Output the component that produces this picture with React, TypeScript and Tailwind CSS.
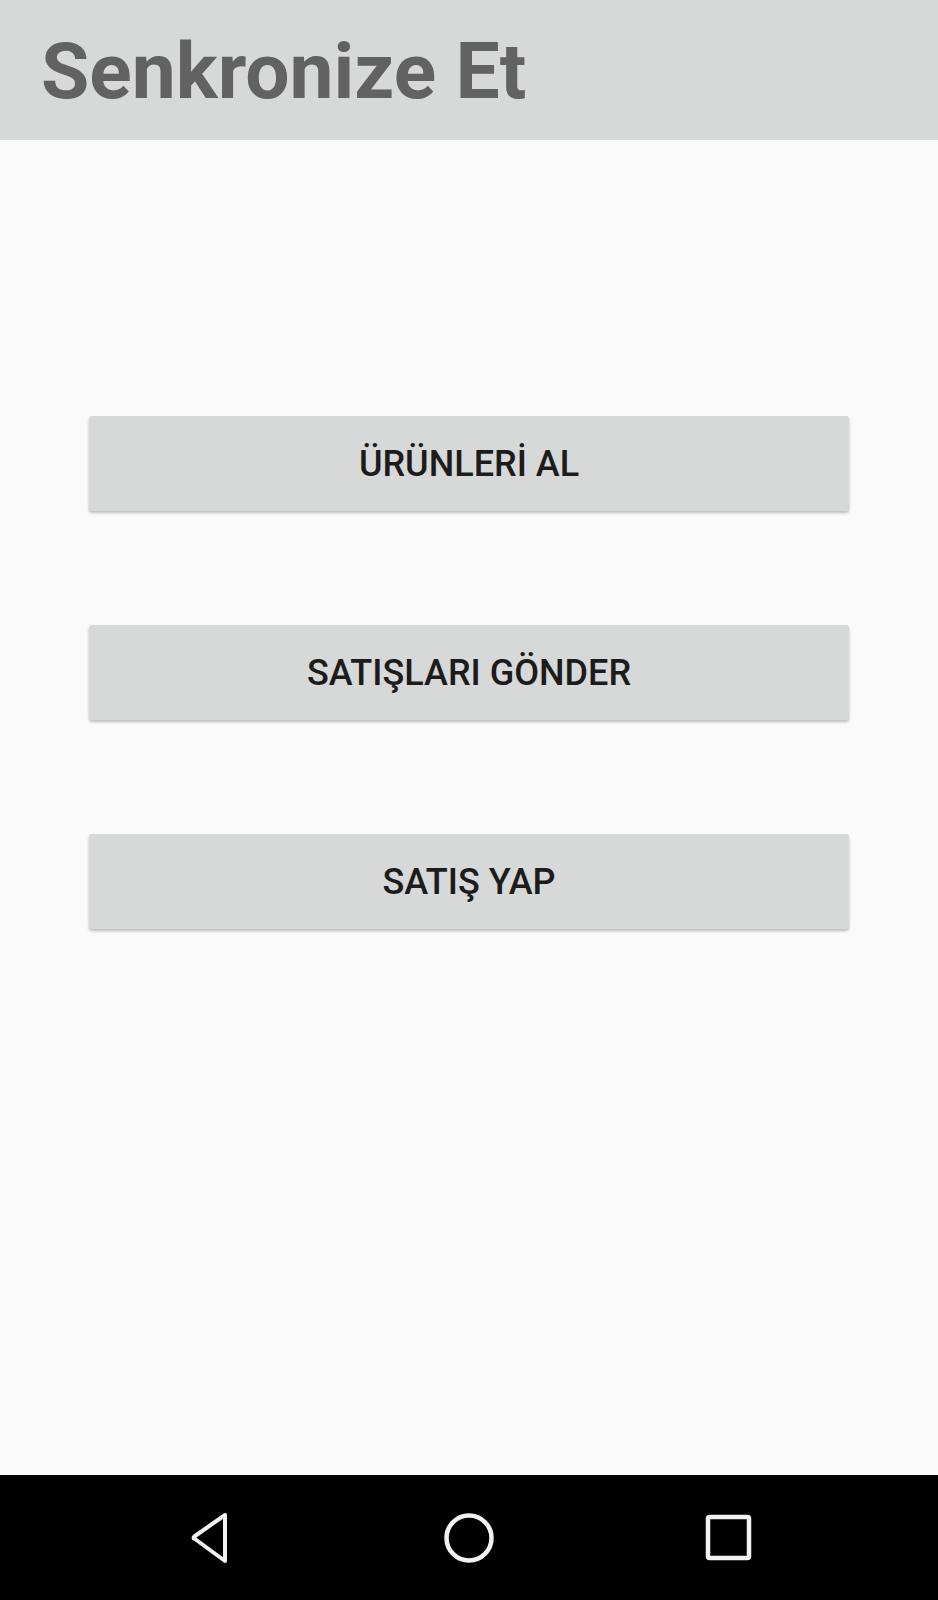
export default function App() {
  const actions = ["ÜRÜNLERİ AL", "SATIŞLARI GÖNDER", "SATIŞ YAP"];

  return (
    <div className="w-[938px] h-[1600px] bg-[#fafafa] flex flex-col overflow-hidden" style={{ fontFamily: "Roboto, 'Liberation Sans', sans-serif" }}>
      {/* Action bar */}
      <header className="h-[140px] bg-[#d7d8d8] shrink-0">
        <h1 className="pt-[32px] pl-[41px] text-[78.5px] leading-none font-bold text-[#626262]">Senkronize Et</h1>
      </header>

      {/* Buttons */}
      <main className="flex-1 flex flex-col items-center pt-[276px] gap-[114px]">
        {actions.map((label) => (
          <button
            key={label}
            className="w-[760px] h-[95px] bg-[#d7d8d8] rounded-[3px] shadow-[0_2px_3px_rgba(0,0,0,0.25)] flex items-center justify-center text-[36px] font-medium text-[#1c1c1c]"
          >
            {label}
          </button>
        ))}
      </main>

      {/* Navigation bar */}
      <nav className="h-[125px] bg-black shrink-0 flex justify-center items-center">
        <div className="w-[260px] flex justify-center">
          <svg width="48" height="52" viewBox="0 0 48 52" fill="none">
            <path d="M40 3 L40 49 L10 27 Q7 26 10 24 Z" stroke="#f2f2f2" strokeWidth="4" strokeLinejoin="round" />
          </svg>
        </div>
        <div className="w-[260px] flex justify-center">
          <svg width="52" height="52" viewBox="0 0 52 52" fill="none">
            <circle cx="26" cy="26" r="22.5" stroke="#f2f2f2" strokeWidth="4.5" />
          </svg>
        </div>
        <div className="w-[260px] flex justify-center">
          <svg width="48" height="48" viewBox="0 0 48 48" fill="none">
            <rect x="3" y="3" width="41" height="41" rx="1.5" stroke="#f2f2f2" strokeWidth="4.5" />
          </svg>
        </div>
      </nav>
    </div>
  );
}
